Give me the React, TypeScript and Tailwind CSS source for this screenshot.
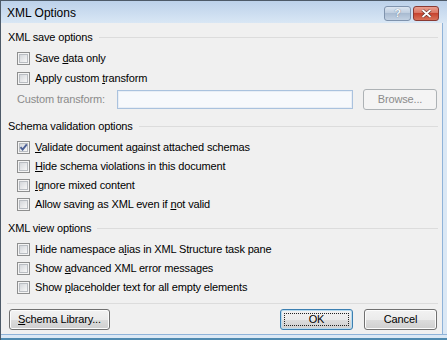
import React from 'react';

function Box({ checked }: { checked?: boolean }) {
  return (
    <span className="relative w-[13px] h-[13px] shrink-0 border border-[#8e8f8f] bg-[#f4f4f4] p-[1px] flex">
      <span className="flex-1 border border-[#b9bdc2] bg-gradient-to-br from-[#d4d7db] to-[#f7f7f7]" />
      {checked && (
        <svg className="absolute left-0 top-0" width="11" height="11" viewBox="0 0 11 11">
          <path d="M2.5 5.2 L4.6 7.6 L8.8 2.4" fill="none" stroke="#4b5f96" strokeWidth="1.9" />
        </svg>
      )}
    </span>
  );
}

function Check({ children, checked, h = 'h-[19px]' }: { children: React.ReactNode; checked?: boolean; h?: string }) {
  return (
    <div className={`${h} flex items-center pl-[16px] gap-[5px]`}>
      <Box checked={checked} />
      <span>{children}</span>
    </div>
  );
}

function Header({ title, className = '' }: { title: string; className?: string }) {
  return (
    <div className={`h-[19px] flex items-center pl-[7px] pr-[4px] gap-[6px] ${className}`}>
      <span>{title}</span>
      <div className="flex-1 h-px bg-[#dcdcdc]" />
    </div>
  );
}

const btn =
  'h-[21px] rounded-[3px] border border-[#707070] bg-[linear-gradient(#f2f2f2,#ebebeb_50%,#dddddd_50%,#cfcfcf)] shadow-[inset_0_0_0_1px_#fcfcfc] text-[11px] text-black flex items-center justify-center';

export default function App() {
  return (
    <div className="w-[447px] h-[340px] flex flex-col border-l border-t border-[#4d5a68] text-[11px] tracking-[-0.15px] text-black font-['Liberation_Sans',Arial,sans-serif] overflow-hidden">
      {/* title bar */}
      <div className="h-[22px] shrink-0 flex items-center bg-gradient-to-b from-[#bcd1ea] to-[#d9e7f5] pl-[6px] pr-[8px]">
        <span className="text-[12px] tracking-normal pt-[2px]">XML Options</span>
        <div className="ml-auto flex items-center gap-[2px] pt-[2px]">
          <div className="w-[27px] h-[15px] rounded-[3px] border border-[#7f93ad] bg-[linear-gradient(#dbe5f1,#bccbdd_50%,#a9bbd1_50%,#c3d2e3)] flex items-center justify-center">
            <span className="text-[11px] font-bold text-[#f4f7fb] leading-none [text-shadow:0_0_1px_#4b5d75]">?</span>
          </div>
          <div className="w-[26px] h-[15px] rounded-[3px] border border-[#8a3a33] bg-[linear-gradient(#eaa090,#d8705e_50%,#c7432f_50%,#d9735a)] flex items-center justify-center">
            <svg width="11" height="9" viewBox="0 0 11 9">
              <path d="M1.5 1 L9.5 8 M9.5 1 L1.5 8" stroke="#5a2a25" strokeWidth="3" />
              <path d="M1.5 1 L9.5 8 M9.5 1 L1.5 8" stroke="#ffffff" strokeWidth="1.8" />
            </svg>
          </div>
        </div>
      </div>

      <div className="flex-1 flex">
        {/* content */}
        <div className="flex-1 flex flex-col bg-[#f0f0f0] pt-[5px]">
          <Header title="XML save options" />
          <div className="mt-[1px]">
            <Check h="h-[20px]">
              Save <u>d</u>ata only
            </Check>
            <Check h="h-[20px]">
              Apply custom <u>t</u>ransform
            </Check>
          </div>
          <div className="mt-[1px] h-[21px] flex items-center pl-[16px]">
            <span className="w-[100px] text-[#8b8b8b]">Custom transform:</span>
            <div className="w-[236px] h-[19px] border border-[#aac2de] bg-[#f7f9fc] shadow-[inset_0_0_0_1px_#e8eef6]" />
            <div className="ml-[10px] w-[74px] h-[21px] rounded-[3px] border border-[#adb2b5] bg-[#f4f4f4] text-[#8b8b8b] flex items-center justify-center">
              Browse...
            </div>
          </div>

          <Header title="Schema validation options" className="mt-[7px]" />
          <div className="mt-[2px]">
            <Check checked>
              <u>V</u>alidate document against attached schemas
            </Check>
            <Check>
              <u>H</u>ide schema violations in this document
            </Check>
            <Check>
              <u>I</u>gnore mixed content
            </Check>
            <Check>
              Allow saving as XML even if <u>n</u>ot valid
            </Check>
          </div>

          <Header title="XML view options" className="mt-[5px]" />
          <div className="mt-[2px]">
            <Check>
              Hide namespace a<u>l</u>ias in XML Structure task pane
            </Check>
            <Check>
              Show <u>a</u>dvanced XML error messages
            </Check>
            <Check>
              Show <u>p</u>laceholder text for all empty elements
            </Check>
          </div>

          <div className="mt-[6px] ml-[6px] mr-[4px] h-px bg-[#dcdcdc]" />

          <div className="mt-[5px] flex items-center pl-[8px] pr-[5px]">
            <div className={`${btn} w-[101px]`}>
              <span>
                <u>S</u>chema Library...
              </span>
            </div>
            <div className="ml-auto w-[73px] h-[21px] rounded-[3px] border border-[#3c7fb1] bg-[linear-gradient(#f2f2f2,#ebebeb_50%,#dddddd_50%,#cfcfcf)] shadow-[inset_0_0_0_1px_#b8dcf0] p-[3px] flex">
              <span className="flex-1 border border-dotted border-[#222] flex items-center justify-center">OK</span>
            </div>
            <div className={`${btn} ml-[11px] w-[73px]`}>Cancel</div>
          </div>
        </div>
        {/* right frame */}
        <div className="w-[5px] flex">
          <div className="w-px bg-[#8fb3d9]" />
          <div className="flex-1 bg-[#dbe8f5]" />
        </div>
      </div>
      {/* bottom frame */}
      <div className="h-[6px] shrink-0 bg-[#dbe8f5] border-t border-[#8fb3d9] border-b-2 border-b-[#4f8ab0]" />
    </div>
  );
}
